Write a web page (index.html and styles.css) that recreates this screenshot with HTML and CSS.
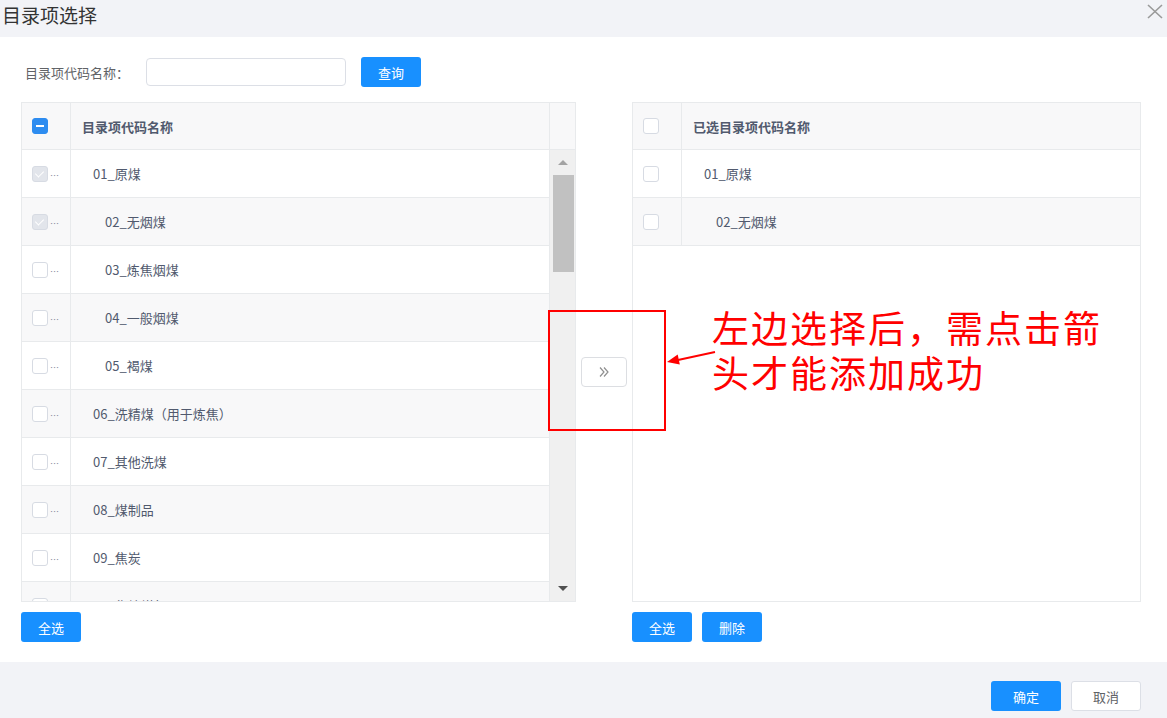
FILE: index.html
```html
<!DOCTYPE html>
<html>
<head>
    <meta charset="utf-8">
    <title>目录项选择</title>
    <link rel="stylesheet" href="styles.css">
</head>
<body>
    <div class="dialog">
        <div class="dialog-header">
            <span class="dialog-title">目录项选择</span>
            <svg class="close-icon" width="16" height="15" viewBox="0 0 16 15">
                <path d="M1 1L15 14M15 1L1 14" stroke="#9a9a9a" stroke-width="1.6" fill="none"/>
            </svg>
        </div>

        <div class="dialog-body">
            <div class="search-row">
                <label class="search-label">目录项代码名称：</label>
                <input class="search-input" type="text">
                <button class="btn btn-primary">查询</button>
            </div>

            <div class="transfer">
                <!-- left: all items -->
                <div class="panel panel-left">
                    <div class="grid">
                        <div class="grid-head">
                            <div class="cell-check"><span class="checkbox indeterminate"></span></div>
                            <div class="cell-name">目录项代码名称</div>
                            <div class="gutter"></div>
                        </div>
                        <div class="grid-body">
                            <div class="rows">
                                <div class="row">
                                    <div class="cell-check"><span class="checkbox checked-disabled"></span><span class="more">…</span></div>
                                    <div class="cell-name">01_原煤</div>
                                </div>
                                <div class="row striped">
                                    <div class="cell-check"><span class="checkbox checked-disabled"></span><span class="more">…</span></div>
                                    <div class="cell-name level-2">02_无烟煤</div>
                                </div>
                                <div class="row">
                                    <div class="cell-check"><span class="checkbox"></span><span class="more">…</span></div>
                                    <div class="cell-name level-2">03_炼焦烟煤</div>
                                </div>
                                <div class="row striped">
                                    <div class="cell-check"><span class="checkbox"></span><span class="more">…</span></div>
                                    <div class="cell-name level-2">04_一般烟煤</div>
                                </div>
                                <div class="row">
                                    <div class="cell-check"><span class="checkbox"></span><span class="more">…</span></div>
                                    <div class="cell-name level-2">05_褐煤</div>
                                </div>
                                <div class="row striped">
                                    <div class="cell-check"><span class="checkbox"></span><span class="more">…</span></div>
                                    <div class="cell-name">06_洗精煤（用于炼焦）</div>
                                </div>
                                <div class="row">
                                    <div class="cell-check"><span class="checkbox"></span><span class="more">…</span></div>
                                    <div class="cell-name">07_其他洗煤</div>
                                </div>
                                <div class="row striped">
                                    <div class="cell-check"><span class="checkbox"></span><span class="more">…</span></div>
                                    <div class="cell-name">08_煤制品</div>
                                </div>
                                <div class="row">
                                    <div class="cell-check"><span class="checkbox"></span><span class="more">…</span></div>
                                    <div class="cell-name">09_焦炭</div>
                                </div>
                                <div class="row striped">
                                    <div class="cell-check"><span class="checkbox"></span><span class="more">…</span></div>
                                    <div class="cell-name">10_焦炉煤气</div>
                                </div>
                            </div>
                            <div class="scrollbar">
                                <div class="scroll-btn"><span class="arrow-up"></span></div>
                                <div class="scroll-thumb"></div>
                                <div class="scroll-btn scroll-btn-down"><span class="arrow-down"></span></div>
                            </div>
                        </div>
                    </div>
                    <div class="panel-actions">
                        <button class="btn btn-primary">全选</button>
                    </div>
                </div>

                <div class="transfer-middle">
                    <button class="btn-move">
                        <svg width="12" height="12" viewBox="0 0 12 12">
                            <path d="M2 1.5L6 6L2 10.5M6 1.5L10 6L6 10.5" stroke="#8f8f8f" stroke-width="1.2" fill="none"/>
                        </svg>
                    </button>
                </div>

                <!-- right: selected items -->
                <div class="panel panel-right">
                    <div class="grid">
                        <div class="grid-head">
                            <div class="cell-check"><span class="checkbox"></span></div>
                            <div class="cell-name">已选目录项代码名称</div>
                        </div>
                        <div class="grid-body">
                            <div class="rows">
                                <div class="row">
                                    <div class="cell-check"><span class="checkbox"></span></div>
                                    <div class="cell-name">01_原煤</div>
                                </div>
                                <div class="row striped">
                                    <div class="cell-check"><span class="checkbox"></span></div>
                                    <div class="cell-name level-2">02_无烟煤</div>
                                </div>
                            </div>
                        </div>
                    </div>
                    <div class="panel-actions">
                        <button class="btn btn-primary">全选</button>
                        <button class="btn btn-primary">删除</button>
                    </div>
                </div>
            </div>
        </div>

        <div class="dialog-footer">
            <button class="btn btn-primary btn-wide">确定</button>
            <button class="btn btn-default btn-wide">取消</button>
        </div>
    </div>

    <!-- red annotation drawn over the screenshot -->
    <div class="note-box"></div>
    <svg class="note-arrow" width="60" height="30" viewBox="0 0 60 30">
        <path d="M55 12L18 20" stroke="#f00" stroke-width="2" fill="none"/>
        <polygon points="7,22 19.8,24.6 17.7,14.6" fill="#f00"/>
    </svg>
    <div class="note-text">
        <div class="note-line">左边选择后，需点击箭</div>
        <div class="note-line">头才能添加成功</div>
    </div>
</body>
</html>
```

FILE: styles.css
```css
body {
    margin: 0;
    font-family: "Noto Sans CJK SC", "Microsoft YaHei", sans-serif;
    font-size: 13px;
    color: #515a6e;
    background: #fff;
}

.dialog {
    width: 1167px;
    height: 718px;
    display: flex;
    flex-direction: column;
}

.dialog-header {
    height: 37px;
    background: #f2f3f7;
    display: flex;
    justify-content: space-between;
    align-items: flex-start;
    padding: 0 4px 0 2px;
}

.dialog-title {
    font-size: 19px;
    line-height: 29px;
    color: #333;
}

.close-icon {
    margin-top: 4px;
}

.dialog-body {
    height: 625px;
    box-sizing: border-box;
    padding: 20px 26px 20px 21px;
}

.search-row {
    height: 30px;
    display: flex;
    align-items: center;
}

.search-label {
    width: 125px;
    padding-left: 4px;
    box-sizing: border-box;
    color: #606266;
}

.search-input {
    width: 200px;
    height: 28px;
    box-sizing: border-box;
    border: 1px solid #dcdfe6;
    border-radius: 4px;
    margin-right: 15px;
    outline: none;
}

.btn {
    height: 30px;
    width: 60px;
    border: none;
    border-radius: 3px;
    font-family: inherit;
    font-size: 13px;
    cursor: pointer;
    padding: 0;
}

.btn-primary {
    background: #1890ff;
    color: #fff;
}

.btn-default {
    background: #fff;
    color: #606266;
    border: 1px solid #dcdfe6;
}

.btn-wide {
    width: 70px;
}

.transfer {
    margin-top: 15px;
    display: flex;
    align-items: center;
}

.panel-left {
    width: 555px;
}

.panel-right {
    width: 509px;
}

.panel-actions {
    margin-top: 10px;
    display: flex;
    gap: 10px;
}

.transfer-middle {
    width: 56px;
    display: flex;
    justify-content: center;
}

.btn-move {
    width: 46px;
    height: 30px;
    background: #fff;
    border: 1px solid #dcdee2;
    border-radius: 4px;
    display: flex;
    align-items: center;
    justify-content: center;
    padding: 0;
}

.grid {
    height: 500px;
    box-sizing: border-box;
    border: 1px solid #e8eaec;
    display: flex;
    flex-direction: column;
    overflow: hidden;
}

.grid-head {
    height: 47px;
    flex: none;
    display: flex;
    background: #f8f8f9;
    border-bottom: 1px solid #e8eaec;
    box-sizing: border-box;
    font-weight: bold;
}

.grid-head .cell-name {
    padding-left: 11px;
}

.gutter {
    width: 25px;
}

.grid-body {
    flex: 1;
    display: flex;
    min-height: 0;
}

.rows {
    flex: 1;
    overflow: hidden;
}

.row {
    height: 48px;
    box-sizing: border-box;
    border-bottom: 1px solid #e8eaec;
    display: flex;
}

.row.striped {
    background: #f8f8f9;
}

.cell-check {
    width: 49px;
    box-sizing: border-box;
    border-right: 1px solid #e8eaec;
    display: flex;
    align-items: center;
    padding-left: 10px;
    flex: none;
}

.cell-name {
    flex: 1;
    display: flex;
    align-items: center;
    padding-left: 22px;
    white-space: nowrap;
}

.panel-left .cell-name {
    border-right: 1px solid #e8eaec;
}

.cell-name.level-2 {
    padding-left: 34px;
}

.more {
    font-size: 9px;
    color: #808695;
    margin-left: 2px;
    margin-top: 3px;
}

.checkbox {
    width: 16px;
    height: 16px;
    box-sizing: border-box;
    border: 1px solid #d7dbe3;
    border-radius: 3px;
    background: #fff;
    position: relative;
    flex: none;
}

.checkbox.indeterminate {
    background: #2d8cf0;
    border-color: #2d8cf0;
}

.checkbox.indeterminate::after {
    content: "";
    position: absolute;
    left: 3px;
    top: 6px;
    width: 8px;
    height: 2px;
    background: #fff;
}

.checkbox.checked-disabled {
    background: #e2e5eb;
    border-color: #d7dbe3;
}

.checkbox.checked-disabled::after {
    content: "";
    position: absolute;
    left: 4px;
    top: 2px;
    width: 4px;
    height: 7px;
    border-right: 1.5px solid #fff;
    border-bottom: 1.5px solid #fff;
    transform: rotate(45deg);
}

.scrollbar {
    width: 25px;
    background: #f0f0f0;
    display: flex;
    flex-direction: column;
}

.scroll-btn {
    height: 25px;
    display: flex;
    align-items: center;
    justify-content: center;
}

.scroll-btn-down {
    margin-top: auto;
}

.arrow-up {
    border-left: 5px solid transparent;
    border-right: 5px solid transparent;
    border-bottom: 5px solid #a3a3a3;
}

.arrow-down {
    border-left: 5px solid transparent;
    border-right: 5px solid transparent;
    border-top: 5px solid #505050;
}

.scroll-thumb {
    height: 97px;
    width: 21px;
    margin-left: 3px;
    background: #c1c1c1;
}

.dialog-footer {
    height: 56px;
    background: #f2f3f7;
    box-sizing: border-box;
    padding: 19px 26px 0 0;
    display: flex;
    justify-content: flex-end;
    gap: 10px;
}

.note-box {
    position: absolute;
    left: 548px;
    top: 310px;
    width: 118px;
    height: 121px;
    box-sizing: border-box;
    border: 2px solid #f00;
}

.note-arrow {
    position: absolute;
    left: 660px;
    top: 340px;
}

.note-text {
    position: absolute;
    left: 712px;
    top: 305px;
    color: #f00;
    white-space: nowrap;
}

.note-line {
    height: 45px;
    font-size: 37px;
    letter-spacing: 2px;
    line-height: 45px;
}
```
